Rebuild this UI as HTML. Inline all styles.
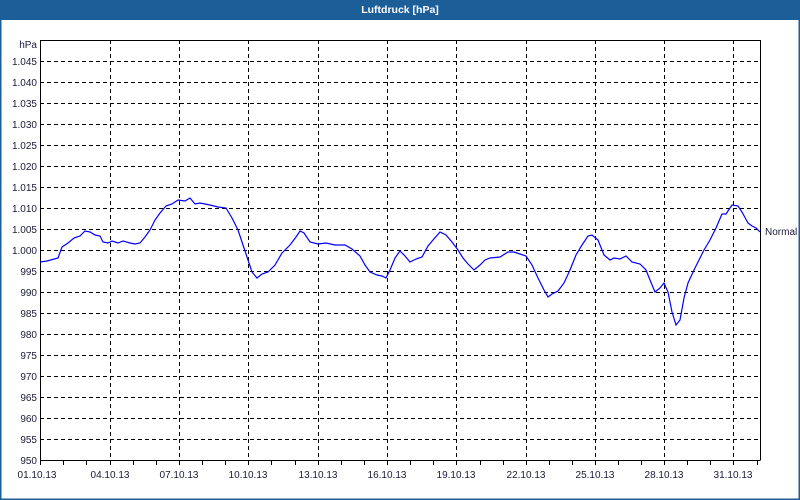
<!DOCTYPE html>
<html><head><meta charset="utf-8"><style>
html,body{margin:0;padding:0;background:#fff;}
svg{display:block;font-family:"Liberation Sans",sans-serif;}
</style></head><body>
<svg width="800" height="500" viewBox="0 0 800 500" xmlns="http://www.w3.org/2000/svg">
<rect x="0" y="0" width="800" height="500" fill="#fff"/>
<rect x="0" y="0" width="800" height="20" fill="#1c5e98"/>
<rect x="0" y="0" width="1.5" height="500" fill="#1c5e98"/>
<rect x="798.5" y="0" width="1.5" height="500" fill="#1c5e98"/>
<rect x="0" y="498.5" width="800" height="1.5" fill="#1c5e98"/>
<text x="400" y="13" text-anchor="middle" font-size="10.5" font-weight="bold" fill="#fff">Luftdruck [hPa]</text>
<g stroke="#000" stroke-width="1" stroke-dasharray="4,3" fill="none">
<path d="M40 61.5H760M40 82.5H760M40 103.5H760M40 124.5H760M40 145.5H760M40 166.5H760M40 187.5H760M40 208.5H760M40 229.5H760M40 250.5H760M40 271.5H760M40 292.5H760M40 313.5H760M40 334.5H760M40 355.5H760M40 376.5H760M40 397.5H760M40 418.5H760M40 439.5H760"/>
<path d="M110.5 40V460M179.5 40V460M248.5 40V460M318.5 40V460M387.5 40V460M456.5 40V460M526.5 40V460M595.5 40V460M664.5 40V460M733.5 40V460"/>
</g>
<g stroke="#000" stroke-width="1" fill="none">
<path d="M40.5 40V460.5H760M40 40.5H760M760.5 40V460.5"/>
<path d="M63.5 460V465M86.5 460V465M133.5 460V465M156.5 460V465M202.5 460V465M225.5 460V465M271.5 460V465M295.5 460V465M341.5 460V465M364.5 460V465M410.5 460V465M433.5 460V465M480.5 460V465M503.5 460V465M549.5 460V465M572.5 460V465M618.5 460V465M641.5 460V465M687.5 460V465M710.5 460V465M757.5 460V465M40.5 460V465M110.5 460V465M179.5 460V465M248.5 460V465M318.5 460V465M387.5 460V465M456.5 460V465M526.5 460V465M595.5 460V465M664.5 460V465M733.5 460V465"/>
</g>
<g font-size="10" fill="#1a1a3a" text-anchor="end">
<text x="37" y="48">hPa</text>
<text x="37" y="65">1.045</text><text x="37" y="86">1.040</text><text x="37" y="107">1.035</text><text x="37" y="128">1.030</text><text x="37" y="149">1.025</text><text x="37" y="170">1.020</text><text x="37" y="191">1.015</text><text x="37" y="212">1.010</text><text x="37" y="233">1.005</text><text x="37" y="254">1.000</text><text x="37" y="275">995</text><text x="37" y="296">990</text><text x="37" y="317">985</text><text x="37" y="338">980</text><text x="37" y="359">975</text><text x="37" y="380">970</text><text x="37" y="401">965</text><text x="37" y="422">960</text><text x="37" y="443">955</text><text x="37" y="464">950</text>
</g>
<g font-size="10" fill="#1a1a3a" text-anchor="middle">
<text x="37" y="478">01.10.13</text><text x="110" y="478">04.10.13</text><text x="179" y="478">07.10.13</text><text x="248" y="478">10.10.13</text><text x="318" y="478">13.10.13</text><text x="387" y="478">16.10.13</text><text x="456" y="478">19.10.13</text><text x="526" y="478">22.10.13</text><text x="595" y="478">25.10.13</text><text x="664" y="478">28.10.13</text><text x="733" y="478">31.10.13</text>
</g>
<text x="765" y="235" font-size="10" fill="#1a1a3a">Normal</text>
<polyline fill="none" stroke="#0000ff" stroke-width="1.2" points="40,262 47,261 58,258 62,247 68,243 74,238 80,236 85,231 90,232 95,235 100,236 103,242 108,243 112,241 118,243 123,241 130,243 135,244 140,243 145,237 150,230 155,220 160,213 166,206 172,204 178,200 185,201 190,198 195,204 200,203 210,205 218,207 226,208 232,218 238,230 243,245 248,260 252,272 257,278 262,274 268,272 275,265 282,253 290,245 296,237 300,231 304,233 310,242 318,244 326,243 335,245 345,245 352,249 360,256 365,265 370,272 377,275 382,276 386,278 390,270 395,258 400,251 405,256 410,262 416,259 422,257 428,246 433,240 440,232 446,235 452,242 458,250 463,258 468,264 474,270 480,265 485,260 490,258 500,257 508,252 514,252 520,254 526,256 532,265 538,278 544,290 548,297 552,294 558,291 564,283 570,270 576,255 582,245 588,236 592,235 598,240 604,255 610,260 614,258 620,259 626,256 632,262 640,264 646,270 650,280 655,292 660,288 664,283 668,292 672,312 676,325 680,320 684,298 688,283 694,270 698,262 704,250 710,240 716,228 722,214 726,214 732,205 738,206 742,212 748,223 752,226 756,228 760,232"/>
</svg>
</body></html>
